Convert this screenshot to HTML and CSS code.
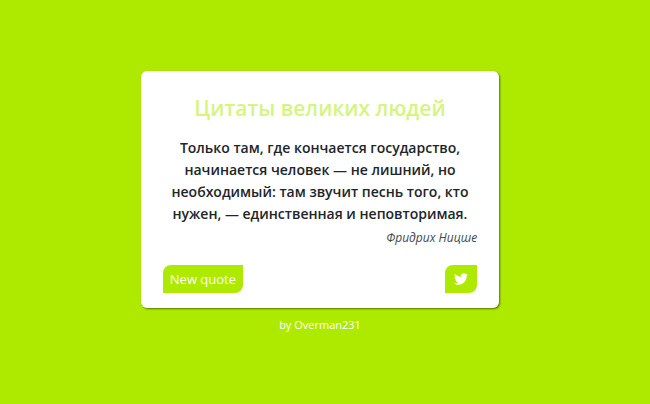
FILE: index.html
```html
<!DOCTYPE html>
<html lang="ru">
<head>
<meta charset="utf-8">
<meta name="viewport" content="width=device-width, initial-scale=1">
<title>Цитаты великих людей</title>
<link rel="stylesheet" href="styles.css">
</head>
<body>
<main class="page">
  <section class="quote-box">
    <h1 class="title">Цитаты великих людей</h1>
    <blockquote class="quote">
      <p class="quote-text">Только там, где кончается государство, начинается человек — не лишний, но необходимый: там звучит песнь того, кто нужен, — единственная и неповторимая.</p>
      <footer class="author">Фридрих Ницше</footer>
    </blockquote>
    <div class="actions">
      <button class="btn" type="button">New quote</button>
      <a class="btn btn-icon" href="#tweet" aria-label="Tweet">
        <svg class="icon" viewBox="0 0 512 512" aria-hidden="true"><path fill="currentColor" d="M459.37 151.716c.325 4.548.325 9.097.325 13.645 0 138.72-105.583 298.558-298.558 298.558-59.452 0-114.68-17.219-161.137-47.106 8.447.974 16.568 1.299 25.34 1.299 49.055 0 94.213-16.568 130.274-44.832-46.132-.975-84.792-31.188-98.112-72.772 6.498.974 12.995 1.624 19.818 1.624 9.421 0 18.843-1.3 27.614-3.573-48.081-9.747-84.143-51.98-84.143-102.985v-1.299c13.969 7.797 30.214 12.67 47.431 13.319-28.264-18.843-46.781-51.005-46.781-87.391 0-19.492 5.197-37.36 14.294-52.954 51.655 63.675 129.3 105.258 216.365 109.807-1.624-7.797-2.599-15.918-2.599-24.04 0-57.828 46.782-104.934 104.934-104.934 30.213 0 57.502 12.67 76.67 33.137 23.715-4.548 46.456-13.32 66.599-25.34-7.798 24.366-24.366 44.833-46.132 57.827 21.117-2.273 41.584-8.122 60.426-16.243-14.292 20.791-32.161 39.308-52.628 54.253z"/></svg>
      </a>
    </div>
  </section>
  <p class="credit">by Overman231</p>
</main>
</body>
</html>
```

FILE: styles.css
```css
* { box-sizing: border-box; }

body {
  margin: 0;
  background: #aeea00;
  color: #212529;
  font-family: "Segoe UI", "Open Sans", "Noto Sans", sans-serif;
}

.page {
  min-height: 100vh;
  padding-right: 10px;
  display: flex;
  flex-direction: column;
  align-items: center;
  justify-content: center;
}

.quote-box {
  width: 56%;
  min-width: 280px;
  padding: 22px 22px 15px;
  border-radius: 6px;
  background: #fff;
  box-shadow: 1px 1px 2px rgba(0, 0, 0, 0.5);
}

.title {
  margin: 0 0 14px;
  color: #d6f47f;
  font-size: 21px;
  font-weight: 600;
  line-height: 30px;
  text-align: center;
}

.quote { margin: 0 0 16px; }

.quote-text {
  margin: 0 0 2px;
  font-size: 14px;
  font-weight: 600;
  line-height: 22px;
  text-align: center;
}

.author {
  color: #43474b;
  font-size: 12px;
  font-style: italic;
  line-height: 22px;
  text-align: right;
}

.actions {
  display: flex;
  justify-content: space-between;
}

.btn {
  display: flex;
  align-items: center;
  justify-content: center;
  height: 28px;
  padding: 0 7px;
  border: 0;
  border-radius: 8px 0;
  background: #aeea00;
  color: #fff;
  font: 13px "Segoe UI", "Open Sans", "Noto Sans", sans-serif;
}

.btn-icon { width: 32px; }

.icon { width: 14px; height: 14px; }

.credit {
  margin: 8px 0 0;
  color: #fff;
  font-size: 11px;
  line-height: 18px;
}
```
